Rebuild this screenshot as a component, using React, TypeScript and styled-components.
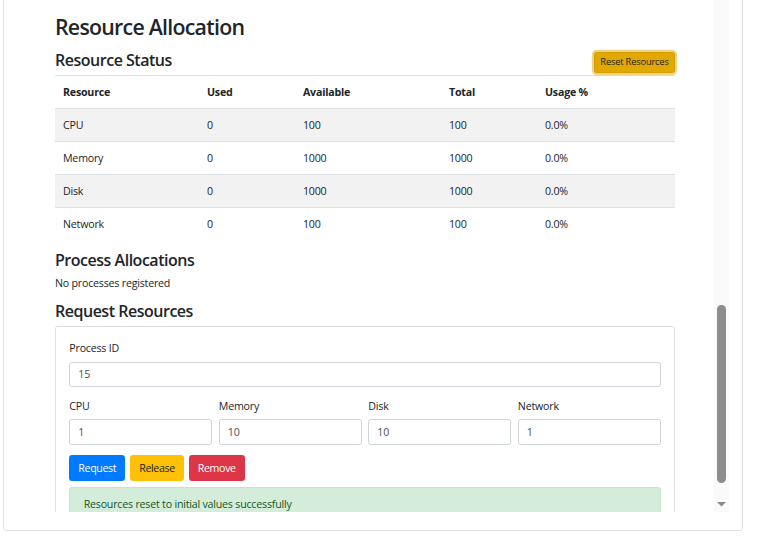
import React from "react";
import styled, { createGlobalStyle } from "styled-components";

const GlobalStyle = createGlobalStyle`
  *, *::before, *::after { box-sizing: border-box; }
  html, body { margin: 0; padding: 0; background: #ffffff; overflow: hidden; }
  body {
    font-family: "Open Sans", "Liberation Sans", sans-serif;
    font-size: 10.667px;
    line-height: 1.5;
    letter-spacing: -0.02em;
    color: #212529;
  }
`;

const Page = styled.div`
  padding-left: 3px;
`;

const Card = styled.section`
  width: 740px;
  margin-top: -22px;
  border: 1px solid #dee2e6;
  border-radius: 3px;
  padding: 13.33px 13.33px 18px 13.33px;
  background: #ffffff;
`;

const ScrollFrame = styled.div`
  display: flex;
  height: 520px;
`;

const Viewport = styled.div`
  flex: 1;
  min-width: 0;
  overflow: hidden;
  padding: 22px 38.67px 0 37.67px;
`;

const Scrollbar = styled.div`
  width: 15px;
  flex: none;
  display: flex;
  flex-direction: column;
  background: #fafafa;
`;

const Rail = styled.div`
  flex: 1;
  padding: 0 3px;
`;

const Thumb = styled.div`
  margin-top: 312.67px;
  height: 178px;
  border-radius: 5px;
  background: #8c8c8c;
`;

const ArrowButton = styled.div`
  height: 15px;
  display: flex;
  align-items: center;
  justify-content: center;
`;

const Title = styled.h2`
  margin: 0 0 10.67px;
  font-size: 21.33px;
  font-weight: 600;
  line-height: 1.2;
  letter-spacing: -0.035em;
  color: #212529;
`;

const SectionHeader = styled.div`
  display: flex;
  justify-content: space-between;
  align-items: flex-end;
`;

const SectionTitle = styled.h4`
  margin: 0 0 5.33px;
  font-size: 16px;
  font-weight: 600;
  line-height: 1.2;
  letter-spacing: -0.03em;
  color: #212529;
`;

const ResetButton = styled.button`
  margin-bottom: 2px;
  padding: 2.67px 5.33px;
  font-family: inherit;
  font-size: 9.33px;
  line-height: 1.5;
  letter-spacing: -0.02em;
  color: #212529;
  background: #e0a800;
  border: 1px solid #d39e00;
  border-radius: 2.67px;
  box-shadow: 0 0 0 2.13px rgba(222, 170, 12, 0.5);
`;

const Table = styled.table`
  width: 100%;
  border-collapse: collapse;
  margin-bottom: 10.67px;
  color: #212529;
`;

const HeadCell = styled.th<{ $width: number }>`
  width: ${(p) => p.$width}px;
  padding: 8px;
  text-align: left;
  font-weight: 700;
  line-height: 16px;
  border-top: 1px solid #dee2e6;
`;

const Row = styled.tr<{ $striped: boolean }>`
  background: ${(p) => (p.$striped ? "rgba(0, 0, 0, 0.05)" : "transparent")};
`;

const Cell = styled.td`
  padding: 8px;
  line-height: 16px;
  border-top: 1px solid #dee2e6;
`;

const EmptyText = styled.p`
  margin: 0 0 10.67px;
`;

const FormCard = styled.div`
  border: 1px solid rgba(0, 0, 0, 0.125);
  border-radius: 2.67px;
  padding: 13px 13.33px 13.33px;
`;

const FieldGroup = styled.div`
  margin-bottom: 10.67px;
`;

const FieldGrid = styled.div`
  display: grid;
  grid-template-columns: repeat(4, 1fr);
  column-gap: 6.67px;
  margin-bottom: 10.67px;
`;

const Label = styled.label`
  display: block;
  margin-bottom: 5.33px;
`;

const Input = styled.input`
  display: block;
  width: 100%;
  height: 25.4px;
  padding: 4px 8px;
  font-family: inherit;
  font-size: 10.667px;
  line-height: 1.5;
  letter-spacing: -0.02em;
  color: #495057;
  background: #ffffff;
  border: 1px solid #ced4da;
  border-radius: 2.67px;
  outline: none;
`;

const ButtonRow = styled.div`
  display: flex;
  gap: 5px;
`;

const palette = {
  primary: { bg: "#007bff", border: "#007bff", fg: "#ffffff" },
  warning: { bg: "#ffc107", border: "#ffc107", fg: "#212529" },
  danger: { bg: "#dc3545", border: "#dc3545", fg: "#ffffff" },
};

const ActionButton = styled.button<{ $variant: keyof typeof palette }>`
  padding: 4px 8px;
  font-family: inherit;
  font-size: 10.667px;
  line-height: 1.5;
  letter-spacing: -0.035em;
  color: ${(p) => palette[p.$variant].fg};
  background: ${(p) => palette[p.$variant].bg};
  border: 1px solid ${(p) => palette[p.$variant].border};
  border-radius: 2.67px;
`;

const Alert = styled.div`
  margin-top: 5.33px;
  padding: 8px 13.33px;
  color: #155724;
  background: #d4edda;
  border: 1px solid #c3e6cb;
  border-radius: 2.67px;
`;

const resources = [
  { name: "CPU", used: 0, available: 100, total: 100 },
  { name: "Memory", used: 0, available: 1000, total: 1000 },
  { name: "Disk", used: 0, available: 1000, total: 1000 },
  { name: "Network", used: 0, available: 100, total: 100 },
];

const columns = [
  { label: "Resource", width: 144 },
  { label: "Used", width: 96 },
  { label: "Available", width: 146 },
  { label: "Total", width: 96 },
  { label: "Usage %", width: 138 },
];

const fields = [
  { label: "CPU", value: "1" },
  { label: "Memory", value: "10" },
  { label: "Disk", value: "10" },
  { label: "Network", value: "1" },
];

export default function App() {
  return (
    <>
      <GlobalStyle />
      <Page>
        <Card>
          <ScrollFrame>
            <Viewport>
              <Title>Resource Allocation</Title>
              <SectionHeader>
                <SectionTitle>Resource Status</SectionTitle>
                <ResetButton>Reset Resources</ResetButton>
              </SectionHeader>
              <Table>
                <thead>
                  <tr>
                    {columns.map((c) => (
                      <HeadCell key={c.label} $width={c.width}>
                        {c.label}
                      </HeadCell>
                    ))}
                  </tr>
                </thead>
                <tbody>
                  {resources.map((r, i) => (
                    <Row key={r.name} $striped={i % 2 === 0}>
                      <Cell>{r.name}</Cell>
                      <Cell>{r.used}</Cell>
                      <Cell>{r.available}</Cell>
                      <Cell>{r.total}</Cell>
                      <Cell>{((r.used / r.total) * 100).toFixed(1)}%</Cell>
                    </Row>
                  ))}
                </tbody>
              </Table>

              <SectionTitle>Process Allocations</SectionTitle>
              <EmptyText>No processes registered</EmptyText>

              <SectionTitle>Request Resources</SectionTitle>
              <FormCard>
                <FieldGroup>
                  <Label>Process ID</Label>
                  <Input type="text" defaultValue="15" />
                </FieldGroup>
                <FieldGrid>
                  {fields.map((f) => (
                    <div key={f.label}>
                      <Label>{f.label}</Label>
                      <Input type="text" defaultValue={f.value} />
                    </div>
                  ))}
                </FieldGrid>
                <ButtonRow>
                  <ActionButton $variant="primary">Request</ActionButton>
                  <ActionButton $variant="warning">Release</ActionButton>
                  <ActionButton $variant="danger">Remove</ActionButton>
                </ButtonRow>
                <Alert>Resources reset to initial values successfully</Alert>
              </FormCard>
            </Viewport>
            <Scrollbar>
              <Rail>
                <Thumb />
              </Rail>
              <ArrowButton>
                <svg width="9" height="5" viewBox="0 0 9 5" aria-hidden="true">
                  <path d="M0 0 H9 L4.5 4.5 Z" fill="#8a8a8a" />
                </svg>
              </ArrowButton>
            </Scrollbar>
          </ScrollFrame>
        </Card>
      </Page>
    </>
  );
}
